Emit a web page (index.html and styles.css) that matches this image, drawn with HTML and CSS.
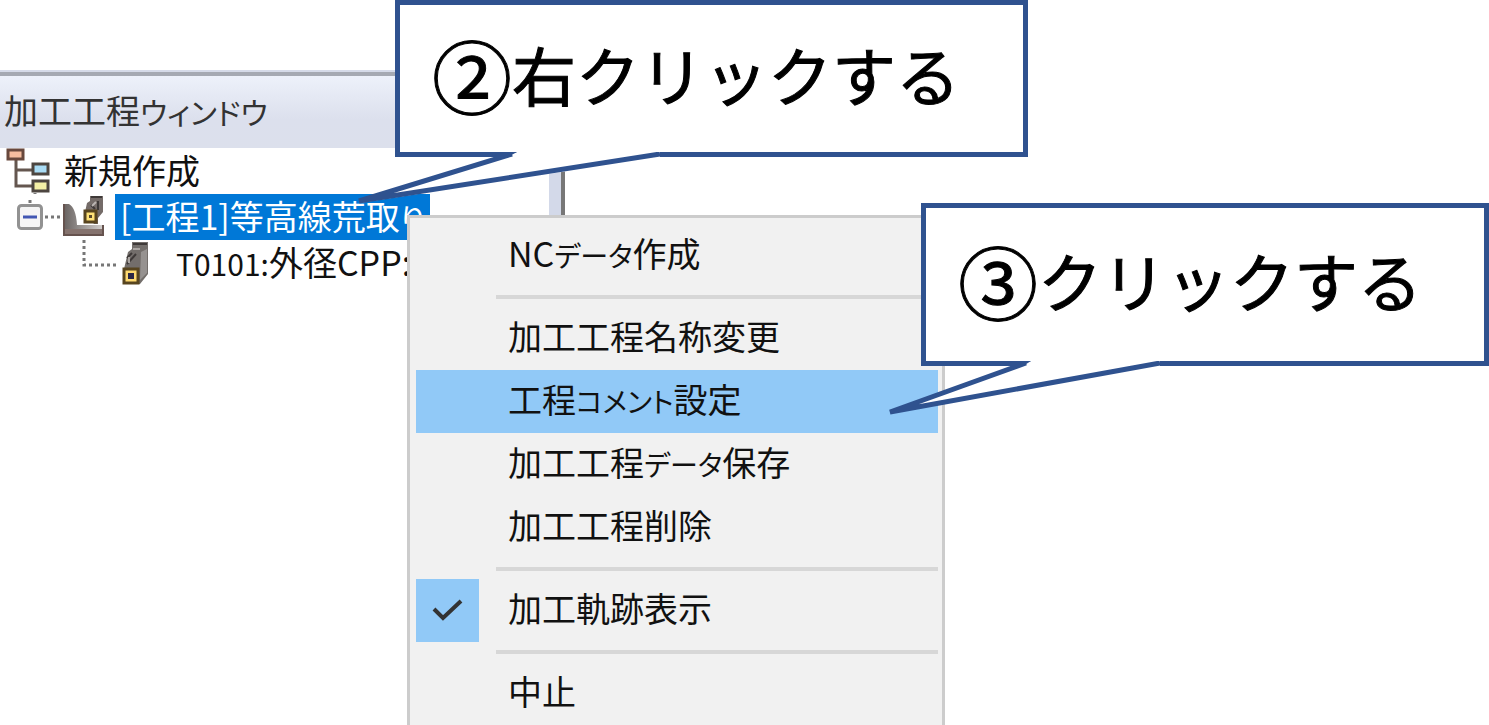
FILE: index.html
```html
<!DOCTYPE html>
<html lang="ja">
<head>
<meta charset="utf-8">
<title>加工工程ウィンドウ</title>
<link rel="stylesheet" href="styles.css">
</head>
<body>
<main class="stage">
  <section class="panel">
    <h1 class="panel-title">加工工程<span class="compact">ウィンドウ</span></h1>
    <div class="panel-body">
      <ul class="tree">
        <li class="row row-root">
          <svg class="icon" width="46" height="46" viewBox="0 0 46 46" aria-hidden="true">
            <path d="M11 12V38H28M11 22H28" fill="none" stroke="#64564f" stroke-width="3"/>
            <rect x="3" y="2" width="15" height="9" fill="#f6bd9f" stroke="#68483d" stroke-width="3"/>
            <rect x="28" y="16" width="15" height="10" fill="#a9dcf5" stroke="#4d4640" stroke-width="3"/>
            <rect x="28" y="33" width="15" height="10" fill="#f4f0a6" stroke="#4d4640" stroke-width="3"/>
            <path d="M30 45V46" stroke="#777" stroke-width="3"/>
          </svg>
          <span class="label">新規作成</span>
        </li>
        <li class="row row-process">
          <button class="toggle" type="button" aria-label="折りたたむ">
            <svg width="26" height="34" viewBox="0 0 26 34" aria-hidden="true">
              <path d="M13 0V3" stroke="#777" stroke-width="3"/>
              <rect x="1.5" y="5.5" width="23" height="23" rx="3" fill="#f5f5f5" stroke="#929292" stroke-width="3"/>
              <path d="M6 17H20" stroke="#4257b3" stroke-width="3"/>
            </svg>
          </button>
          <svg class="link" width="17" height="4" viewBox="0 0 17 4" aria-hidden="true"><path d="M2 2H17" stroke="#777" stroke-width="3" stroke-dasharray="3 3"/></svg>
          <svg class="icon" width="42" height="44" viewBox="0 0 42 44" aria-hidden="true">
            <defs>
              <linearGradient id="metal"><stop offset="0" stop-color="#696361"/><stop offset="1" stop-color="#d3d0ce"/></linearGradient>
            </defs>
            <path d="M1 9H6Q13 13 14 30H40V39H1Z" fill="url(#metal)"/>
            <path d="M1 34H40V40H1Z" fill="#85736e"/>
            <path d="M1 9V40H40V30" fill="none" stroke="#66534e" stroke-width="2"/>
            <path d="M27 1H40V17L35 23V29H31L22 17L24 8L27 6Z" fill="#746b68"/>
            <path d="M28 2H39M28 10L32 14M35 6V15" stroke="#3e3938" stroke-width="2"/>
            <path d="M29 11L33 7" stroke="#bbb5b2" stroke-width="2"/>
            <rect x="22" y="16" width="11" height="11" fill="#ffe276" stroke="#58451f" stroke-width="3"/>
            <rect x="26" y="20" width="3" height="3" fill="#59482b"/>
          </svg>
          <span class="label selected">[工程1]等高線荒取<span class="compact">り</span></span>
        </li>
        <li class="row row-tool">
          <svg class="branch" width="34" height="30" viewBox="0 0 34 30" aria-hidden="true"><path d="M2 0V25H34" fill="none" stroke="#777" stroke-width="3" stroke-dasharray="3 3"/></svg>
          <svg class="icon" width="28" height="44" viewBox="0 0 28 44" aria-hidden="true">
            <path d="M10 1H26V33L18 43H2V28L6 11L10 8Z" fill="#736e6b"/>
            <path d="M19 11L25 8V32L18 39Z" fill="#969290"/>
            <path d="M11 3H25M5 17L10 12M5 23L14 13" stroke="#3e3938" stroke-width="2"/>
            <path d="M11 8H18M7 22V16" stroke="#aaa5a2" stroke-width="2"/>
            <rect x="2" y="28" width="14" height="14" fill="#ffda70" stroke="#58451f" stroke-width="3"/>
            <rect x="6" y="32" width="6" height="6" fill="#2c2846"/>
          </svg>
          <span class="label"><span class="compact">T0101:</span>外径CPP:</span>
        </li>
      </ul>
    </div>
  </section>

  <div class="menu" role="menu">
    <button class="item" type="button" role="menuitem"><span>NC<span class="compact">データ</span>作成</span></button>
    <hr class="separator">
    <button class="item" type="button" role="menuitem">加工工程名称変更</button>
    <button class="item active" type="button" role="menuitem"><span>工程<span class="compact">コメント</span>設定</span></button>
    <button class="item" type="button" role="menuitem"><span>加工工程<span class="compact">データ</span>保存</span></button>
    <button class="item" type="button" role="menuitem">加工工程削除</button>
    <hr class="separator">
    <div class="check-row">
      <span class="check">
        <input id="path-visible" type="checkbox" checked>
        <svg width="32" height="24" viewBox="0 0 32 24" aria-hidden="true"><path d="M2 10L11 19L29 2" fill="none" stroke="#333" stroke-width="4"/></svg>
      </span>
      <label class="item" for="path-visible">加工軌跡表示</label>
    </div>
    <hr class="separator">
    <button class="item" type="button" role="menuitem">中止</button>
  </div>

  <aside class="callout callout-right-click">
    <span class="number">②</span><span>右クリックする</span>
    <svg class="tail" width="310" height="58" viewBox="0 0 310 58" aria-hidden="true">
      <path d="M159 0L1 51L302 5V0Z" fill="#fff"/>
      <path d="M154 2L1 49L302 2" fill="none" stroke="#2f528f" stroke-width="5" stroke-linejoin="bevel"/>
      <path d="M130 0H159L150 5H130Z" fill="#2f528f"/>
    </svg>
  </aside>
  <aside class="callout callout-click">
    <span class="number">③</span><span>クリックする</span>
    <svg class="tail" width="280" height="58" viewBox="0 0 280 58" aria-hidden="true">
      <path d="M142 0L1 51L271 5V0Z" fill="#fff"/>
      <path d="M137 2L1 51L271 2" fill="none" stroke="#2f528f" stroke-width="5" stroke-linejoin="bevel"/>
      <path d="M110 0H142L134 5H110Z" fill="#2f528f"/>
    </svg>
  </aside>
</main>
</body>
</html>
```
FILE: styles.css
```css
* {
  box-sizing: border-box;
}

body {
  margin: 0;
  background: #fff;
  color: #111;
  font-family: "Noto Sans CJK JP", sans-serif;
  font-size: 34px;
  line-height: 46px;
  font-feature-settings: "palt";
}

.stage {
  position: relative;
  min-height: 100vh;
  padding-top: 70px;
  overflow: hidden;
}

/* Kana and codes set slightly smaller than the kanji beside them */
.compact {
  font-size: 30px;
  line-height: 1;
}

/* Docked process window */
.panel {
  display: flex;
  flex-direction: column;
  max-width: 565px;
  border-top: 2px solid #d5dae8;
}

.panel-title {
  margin: 0;
  padding: 12px 4px 16px;
  border-top: 4px solid #a5a9b2;
  background: linear-gradient(#edf1fa, #dce0ed 60%, #dce0ec);
  color: #333;
  font-size: 34px;
  font-weight: 400;
  line-height: 44px;
}

.panel-body {
  min-height: 220px;
  border-right: 4px solid #777;
  box-shadow: inset -12px 0 #d3d9e9;
}

.tree {
  margin: 0;
  padding: 0;
  list-style: none;
  white-space: nowrap;
}

.row {
  display: flex;
  align-items: center;
  height: 46px;
}

.label {
  height: 46px;
  line-height: 44px;
}

.icon,
.link,
.branch {
  flex: none;
}

.row-root {
  gap: 13px;
  padding-left: 5px;
}

.row-process {
  padding-left: 17px;
}

.toggle {
  display: flex;
  padding: 0;
  border: 0;
  background: none;
}

.row-process .icon {
  margin-left: 3px;
  margin-right: 10px;
}

.row-tool {
  gap: 6px;
  padding-left: 82px;
}

.row-tool .label {
  margin-left: 20px;
}

.row-tool .branch {
  align-self: flex-start;
}

.selected {
  padding: 0 5px;
  background: #0078d7;
  color: #fff;
}

/* Context menu */
.menu {
  position: absolute;
  top: 215px;
  left: 407px;
  width: 538px;
  padding: 6px 4px 0 6px;
  border: 3px solid #ccc;
  border-bottom: 0;
  background: #f1f1f1;
}

.item {
  display: flex;
  align-items: center;
  width: 100%;
  height: 63px;
  padding: 0 0 6px 92px;
  border: 0;
  background: none;
  color: #111;
  font: inherit;
  font-feature-settings: inherit;
  text-align: left;
}

.item .compact {
  font-size: 28px;
}

.active {
  background: #91c9f7;
}

.separator {
  height: 4px;
  margin: 8px 0 8px 80px;
  border: 0;
  background: #d7d7d7;
}

.check-row {
  display: flex;
}

.check-row .item {
  padding-left: 29px;
}

.check {
  display: grid;
  place-items: center;
}

.check > * {
  grid-area: 1 / 1;
}

.check input {
  width: 63px;
  height: 63px;
  margin: 0;
  appearance: none;
  background: #91c9f7;
}

/* Instruction callouts */
.callout {
  position: absolute;
  display: flex;
  align-items: center;
  padding: 0 0 12px 32px;
  border: 5px solid #2f528f;
  background: #fff;
  color: #000;
  font-size: 64px;
  font-weight: 400;
  line-height: 80px;
  font-feature-settings: normal;
  white-space: nowrap;
  -webkit-text-stroke: 1px #000;
}

.number {
  font-size: 80px;
}

.callout-right-click {
  top: 0;
  left: 395px;
  width: 633px;
  height: 157px;
}

.callout-click {
  top: 203px;
  left: 921px;
  width: 568px;
  height: 163px;
}

.tail {
  position: absolute;
  top: 100%;
}

.callout-right-click .tail {
  left: -42px;
}

.callout-click .tail {
  left: -37px;
}
```
